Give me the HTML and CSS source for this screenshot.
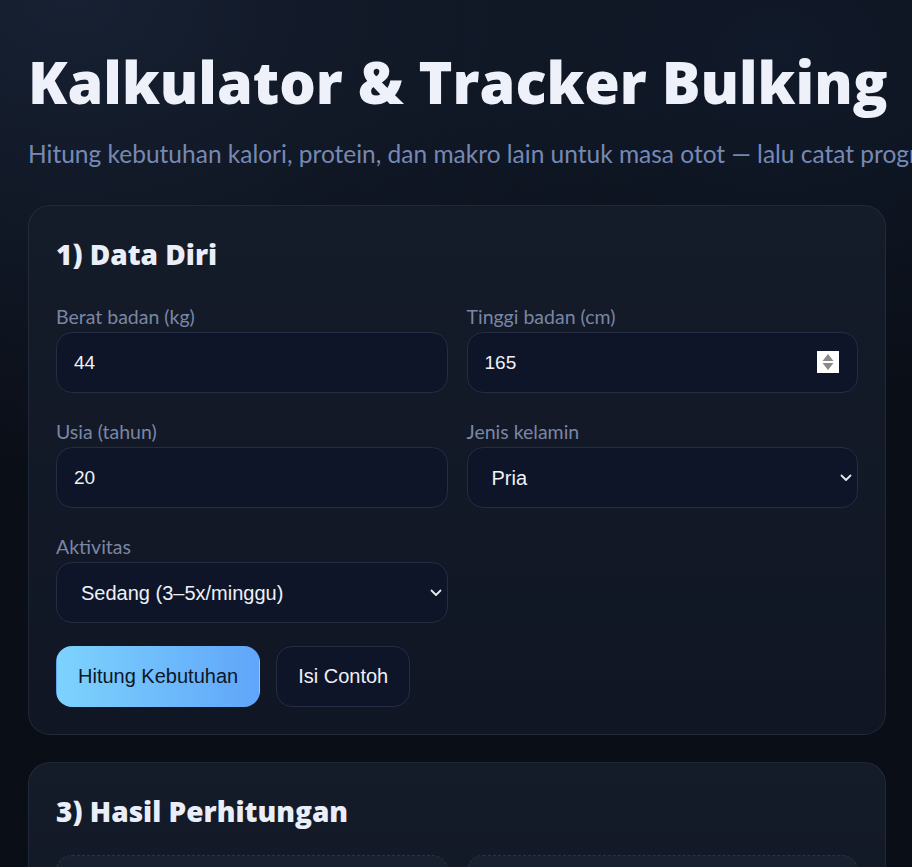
FILE: index.html
```html
<!DOCTYPE html>
<html lang="id">
<head>
<meta charset="utf-8">
<title>Kalkulator &amp; Tracker Bulking</title>
<link rel="stylesheet" href="styles.css">
</head>
<body>
<main class="page">
  <header class="hero">
    <h1 class="title">Kalkulator &amp; Tracker Bulking</h1>
    <p class="subtitle">Hitung kebutuhan kalori, protein, dan makro lain untuk masa otot — lalu catat progres harianmu.</p>
  </header>

  <section class="card">
    <h2 class="card-title">1) Data Diri</h2>
    <div class="grid form-grid">
      <label class="field">
        <span class="label">Berat badan (kg)</span>
        <span class="control"><input class="input" type="text" value="44"></span>
      </label>
      <label class="field">
        <span class="label">Tinggi badan (cm)</span>
        <span class="control">
          <input class="input" type="text" value="165">
          <svg class="spin" width="22" height="22" viewBox="0 0 22 22" aria-hidden="true">
            <rect width="22" height="22" fill="#ffffff"/>
            <path d="M11 3 L16.5 10 L5.5 10 Z" fill="#8a8a8a"/>
            <path d="M11 19 L16.5 12 L5.5 12 Z" fill="#8a8a8a"/>
          </svg>
        </span>
      </label>
      <label class="field">
        <span class="label">Usia (tahun)</span>
        <span class="control"><input class="input" type="text" value="20"></span>
      </label>
      <label class="field">
        <span class="label">Jenis kelamin</span>
        <span class="control">
          <select class="input select"><option>Pria</option><option>Wanita</option></select>
          <svg class="chev" width="12" height="8" viewBox="0 0 12 8" aria-hidden="true"><path d="M1.5 1.5 L6 6 L10.5 1.5" fill="none" stroke="#e5e7eb" stroke-width="1.8" stroke-linecap="round" stroke-linejoin="round"/></svg>
        </span>
      </label>
      <label class="field">
        <span class="label">Aktivitas</span>
        <span class="control">
          <select class="input select"><option>Sedang (3–5x/minggu)</option></select>
          <svg class="chev" width="12" height="8" viewBox="0 0 12 8" aria-hidden="true"><path d="M1.5 1.5 L6 6 L10.5 1.5" fill="none" stroke="#e5e7eb" stroke-width="1.8" stroke-linecap="round" stroke-linejoin="round"/></svg>
        </span>
      </label>
    </div>
    <div class="actions">
      <button class="btn btn-primary" type="button">Hitung Kebutuhan</button>
      <button class="btn btn-ghost" type="button">Isi Contoh</button>
    </div>
  </section>

  <section class="card">
    <h2 class="card-title">3) Hasil Perhitungan</h2>
    <div class="grid">
      <div class="stat"></div>
      <div class="stat"></div>
    </div>
  </section>
</main>
</body>
</html>
```

FILE: styles.css
```css
* { box-sizing: border-box; }

html, body {
  margin: 0;
  min-height: 100%;
}

body {
  background:
    radial-gradient(900px 650px at 8% 0%, #172133 0%, rgba(23,33,51,0) 72%),
    radial-gradient(700px 500px at 85% 5%, #111a2a 0%, rgba(17,26,42,0) 70%),
    #0a0e17;
  color: #e8ecf5;
  font-family: "Lato", "Noto Sans", sans-serif;
  overflow-x: hidden;
}

.page {
  padding: 51px 26px 40px 28px;
}

.hero {
  margin-bottom: 36px;
}

.title {
  margin: 0;
  font-family: "Open Sans", "Noto Sans", sans-serif;
  font-weight: 800;
  font-size: 57.5px;
  line-height: 1.1;
  color: #eef1f9;
  white-space: nowrap;
}

.subtitle {
  margin: 25px 0 0;
  font-family: "Lato", "Noto Sans", sans-serif;
  font-size: 24.5px;
  line-height: 1.2;
  color: #7689b5;
  white-space: nowrap;
}

.card {
  background: linear-gradient(180deg, #141b29 0%, #101624 100%);
  border: 1px solid rgba(148,163,184,0.12);
  border-radius: 22px;
  padding: 28px 27px 27px;
  margin-bottom: 27px;
}

.card-title {
  margin: 4px 0 26px;
  font-family: "Open Sans", "Noto Sans", sans-serif;
  font-weight: 800;
  font-size: 28px;
  line-height: 1.2;
  color: #eaeef8;
}

.grid {
  display: grid;
  grid-template-columns: 1fr 1fr;
  column-gap: 19px;
  row-gap: 28px;
}

.form-grid {
  padding-top: 9px;
}

.field {
  display: flex;
  flex-direction: column;
  gap: 4px;
}

.label {
  font-family: "Lato", "Noto Sans", sans-serif;
  font-size: 19.5px;
  line-height: 22px;
  color: #7a86a4;
}

.control {
  position: relative;
  display: block;
}

.input {
  display: block;
  width: 100%;
  height: 61px;
  padding: 0 17px;
  background: #0f1528;
  border: 1px solid #242d42;
  border-radius: 16px;
  color: #eef1f7;
  font-family: "Liberation Sans", Arial, sans-serif;
  font-size: 19px;
  outline: none;
}

.select {
  appearance: none;
  -webkit-appearance: none;
  padding-left: 24px;
  font-size: 20px;
}

.spin {
  position: absolute;
  right: 19px;
  top: 19px;
}

.chev {
  position: absolute;
  right: 6px;
  top: 27px;
  pointer-events: none;
}

.actions {
  display: flex;
  gap: 16px;
  margin-top: 23px;
}

.btn {
  height: 61px;
  border-radius: 16px;
  font-family: "Liberation Sans", Arial, sans-serif;
  font-size: 20px;
  padding: 0 21px;
  cursor: pointer;
}

.btn-primary {
  border: 1px solid transparent;
  background: linear-gradient(90deg, #7dd3fc 0%, #60a5fa 100%);
  color: #0d1626;
}

.btn-ghost {
  background: #0f1528;
  border: 1px solid #242d42;
  color: #eef1f7;
}

.stat {
  height: 120px;
  border: 1px dashed #2a3447;
  border-radius: 16px;
  background: linear-gradient(180deg, #172130 0%, #131b29 100%);
}
```
